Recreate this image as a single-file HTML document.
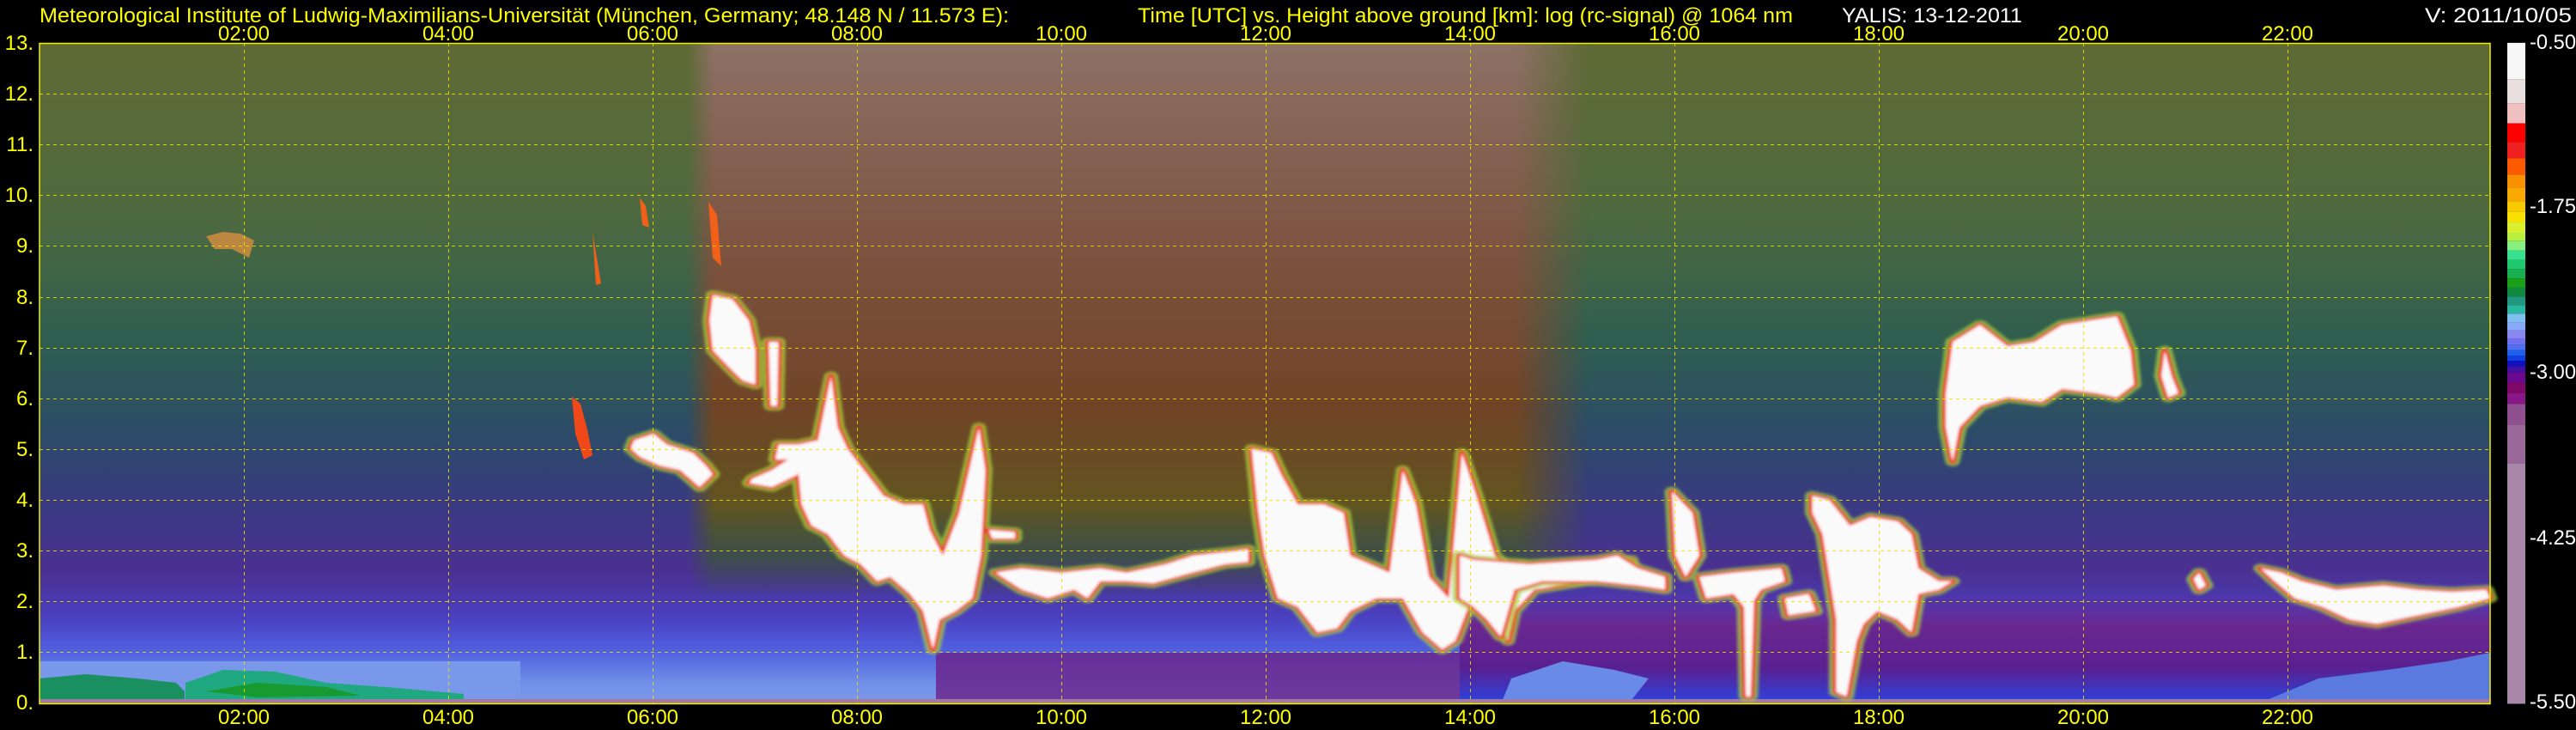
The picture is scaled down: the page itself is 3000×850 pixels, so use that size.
<!DOCTYPE html>
<html><head><meta charset="utf-8"><style>
html,body{margin:0;padding:0;background:#000;}
svg{display:block;}
text{font-family:"Liberation Sans",sans-serif;font-size:24px;}
</style></head><body>
<svg width="3000" height="850" viewBox="0 0 3000 850" xmlns="http://www.w3.org/2000/svg">
<defs>
<linearGradient id="bg" x1="0" y1="0" x2="0" y2="1">
<stop offset="0" stop-color="#5f6a35"/>
<stop offset="0.25" stop-color="#4f6a3e"/>
<stop offset="0.45" stop-color="#2f5e50"/>
<stop offset="0.6" stop-color="#2c4a6a"/>
<stop offset="0.7" stop-color="#3a3a82"/>
<stop offset="0.8" stop-color="#4a3092"/>
<stop offset="0.87" stop-color="#4a40c0"/>
<stop offset="0.92" stop-color="#5060e0"/>
<stop offset="0.97" stop-color="#7090e8"/>
<stop offset="1" stop-color="#8098e8"/>
</linearGradient>
<linearGradient id="red" x1="0" y1="0" x2="0" y2="1">
<stop offset="0" stop-color="#8c7266"/>
<stop offset="0.3" stop-color="#7e5442"/>
<stop offset="0.55" stop-color="#704426"/>
<stop offset="0.7" stop-color="#625420"/>
<stop offset="0.78" stop-color="#3a5a30" stop-opacity="0.7"/>
<stop offset="0.84" stop-color="#3a5a30" stop-opacity="0"/>
</linearGradient>
<linearGradient id="hm" x1="0" y1="0" x2="1" y2="0">
<stop offset="0" stop-color="#000"/>
<stop offset="0.03" stop-color="#fff"/>
<stop offset="0.92" stop-color="#fff"/>
<stop offset="1" stop-color="#000"/>
</linearGradient>
<mask id="m1"><rect x="800" y="50" width="1050" height="769" fill="url(#hm)"/></mask>
<linearGradient id="rbot" x1="0" y1="0" x2="0" y2="1">
<stop offset="0" stop-color="#6a2890" stop-opacity="0"/>
<stop offset="0.3" stop-color="#6a2890"/>
<stop offset="0.7" stop-color="#5a2090"/>
<stop offset="1" stop-color="#3040d8"/>
</linearGradient>
<filter id="soft"><feGaussianBlur stdDeviation="1.5"/></filter>
<path id="cA" d="M170,590 200,600 225,650 235,720 235,800 215,790 195,760 170,720 165,650Z"/>
<path id="cA2" d="M255,700 270,700 268,850 258,850Z"/>
<path id="cB" d="M300,940 330,930 350,780 360,900 375,950 400,1000 430,1060 460,1080 490,1080 500,1140 520,1200 545,1100 560,1000 575,900 585,1000 578,1200 565,1300 540,1330 515,1350 505,1420 490,1330 470,1290 440,1250 420,1260 395,1220 370,1200 345,1150 320,1130 305,1080 300,1000Z M230,1020 260,1000 300,960 300,1010 260,1040 225,1030Z M270,940 310,940 310,975 265,975Z"/>
<path id="cC" d="M600,1240 640,1230 700,1240 760,1230 800,1240 860,1220 900,1200 960,1190 985,1185 985,1215 950,1220 900,1240 840,1265 800,1260 760,1260 740,1300 720,1280 680,1300 640,1280 620,1260Z M590,1140 630,1145 630,1160 595,1160Z"/>
<path id="cD" d="M990,950 1020,960 1035,1010 1060,1080 1100,1080 1130,1100 1140,1200 1200,1240 1220,1000 1240,1080 1260,1250 1290,1300 1310,960 1330,1050 1360,1200 1390,1240 1400,1220 1420,1230 1500,1220 1568,1210 1568,1250 1500,1260 1420,1280 1390,1330 1380,1400 1360,1330 1320,1320 1300,1400 1280,1420 1250,1380 1220,1300 1180,1300 1140,1330 1120,1370 1090,1380 1060,1320 1030,1300 1010,1200 1000,1100Z M50,930 80,915 100,940 140,960 160,990 170,1010 150,1040 120,1000 90,990 60,970 45,950Z"/>
<path id="cE" d="M0,1200 20,1210 100,1220 200,1210 230,1200 260,1230 300,1250 300,1280 260,1270 200,1260 120,1260 80,1280 60,1390 40,1350 20,1320 0,1300Z M310,1050 340,1100 350,1200 330,1250 315,1200Z M350,1250 400,1240 470,1230 475,1260 440,1280 420,1330 400,1290 360,1300Z M415,1300 430,1300 425,1530 418,1530Z M515,1060 540,1070 570,1130 600,1110 640,1120 660,1150 670,1230 700,1260 720,1260 700,1280 670,1290 660,1380 640,1350 610,1330 590,1360 580,1400 565,1530 550,1520 550,1350 540,1250 530,1150 515,1100Z M475,1300 510,1290 520,1330 480,1340Z M720,700 760,660 800,710 840,700 880,660 920,650 960,640 980,720 985,800 960,830 930,820 880,810 850,840 800,830 760,850 730,900 720,980 710,900 710,820Z M1030,720 1040,780 1050,820 1035,830 1025,780Z M1170,1230 1200,1240 1230,1260 1280,1280 1350,1270 1400,1280 1450,1285 1500,1280 1505,1300 1460,1320 1400,1340 1340,1360 1300,1350 1260,1320 1220,1300 1190,1260Z M1080,1240 1090,1270 1080,1280 1072,1255Z"/>
</defs>

<rect x="46" y="50" width="2854" height="769" fill="url(#bg)"/>
<rect x="46" y="770" width="560" height="45" fill="#7a98ea"/>
<path d="M46,790 100,785 160,790 205,795 215,805 215,815 46,815Z" fill="#1a9060"/>
<path d="M216,795 260,780 320,782 380,795 450,800 540,808 540,815 216,815Z" fill="#20a880"/>
<path d="M240,805 300,795 380,800 420,810 300,812Z" fill="#189a30"/>
<rect x="1700" y="690" width="1200" height="125" fill="url(#rbot)"/>
<rect x="1090" y="760" width="610" height="55" fill="#6a2088" opacity="0.8"/>
<path d="M1750,815 1760,790 1820,770 1880,780 1920,790 1900,815Z" fill="#6a8ae8"/>
<path d="M2640,815 2700,790 2780,780 2850,770 2900,760 2900,815Z" fill="#5a7ae0"/>
<rect x="800" y="50" width="1050" height="769" fill="url(#red)" mask="url(#m1)"/>
<rect x="46" y="814" width="2854" height="5" fill="#a07aa0"/>

<g filter="url(#soft)">
<g transform="translate(700,50) scale(0.7653,0.4974)">
<g fill="none" stroke="#a8d040" stroke-width="22" stroke-linejoin="round" opacity="0.7"><use href="#cA"/><use href="#cA2"/><use href="#cB"/><use href="#cC"/><use href="#cD"/></g>
<g fill="none" stroke="#f02818" stroke-width="10" stroke-linejoin="round"><use href="#cA"/><use href="#cA2"/><use href="#cB"/><use href="#cC"/><use href="#cD"/></g>
<g fill="#fafafa"><use href="#cA"/><use href="#cA2"/><use href="#cB"/><use href="#cC"/><use href="#cD"/></g>
</g>
<g transform="translate(1700,50) scale(0.7972,0.4974)">
<g fill="none" stroke="#a8d040" stroke-width="22" stroke-linejoin="round" opacity="0.7"><use href="#cE"/></g>
<g fill="none" stroke="#f02818" stroke-width="10" stroke-linejoin="round"><use href="#cE"/></g>
<g fill="#fafafa"><use href="#cE"/></g>
</g>
</g>
<path d="M666,462 676,470 684,500 690,530 680,535 670,505Z" fill="#f04818"/>
<path d="M745,230 752,240 756,265 748,262Z" fill="#f06018"/>
<path d="M825,235 835,250 840,310 830,300Z" fill="#f06018"/>
<path d="M240,275 260,270 280,272 296,280 290,300 270,290 250,290Z" fill="#d89040" opacity="0.8"/>
<path d="M690,270 700,330 694,332Z" fill="#f06018"/>

<g stroke="#f0e000" stroke-width="1" stroke-dasharray="4,4" opacity="0.85">
<line x1="46" x2="2900" y1="759.5" y2="759.5"/><line x1="46" x2="2900" y1="700.5" y2="700.5"/>
<line x1="46" x2="2900" y1="641.5" y2="641.5"/><line x1="46" x2="2900" y1="582.5" y2="582.5"/>
<line x1="46" x2="2900" y1="523.5" y2="523.5"/><line x1="46" x2="2900" y1="464.5" y2="464.5"/>
<line x1="46" x2="2900" y1="405.5" y2="405.5"/><line x1="46" x2="2900" y1="346.5" y2="346.5"/>
<line x1="46" x2="2900" y1="286.5" y2="286.5"/><line x1="46" x2="2900" y1="227.5" y2="227.5"/>
<line x1="46" x2="2900" y1="168.5" y2="168.5"/><line x1="46" x2="2900" y1="109.5" y2="109.5"/>
<line y1="50" y2="819" x1="284.5" x2="284.5"/><line y1="50" y2="819" x1="522.5" x2="522.5"/>
<line y1="50" y2="819" x1="760.5" x2="760.5"/><line y1="50" y2="819" x1="998.5" x2="998.5"/>
<line y1="50" y2="819" x1="1236.5" x2="1236.5"/><line y1="50" y2="819" x1="1474.5" x2="1474.5"/>
<line y1="50" y2="819" x1="1712.5" x2="1712.5"/><line y1="50" y2="819" x1="1950.5" x2="1950.5"/>
<line y1="50" y2="819" x1="2188.5" x2="2188.5"/><line y1="50" y2="819" x1="2426.5" x2="2426.5"/>
<line y1="50" y2="819" x1="2664.5" x2="2664.5"/>
</g>
<rect x="46" y="50.5" width="2854" height="769" fill="none" stroke="#f0f000" stroke-width="1.5"/>

<g transform="translate(2920,0) scale(1,0.542)">
<rect x="0" y="92" width="21" height="78" fill="#f7f7f7"/>
<rect x="0" y="170" width="21" height="52" fill="#e8dede"/>
<rect x="0" y="222" width="21" height="43" fill="#f0c0c0"/>
<rect x="0" y="265" width="21" height="40" fill="#ff0000"/>
<rect x="0" y="305" width="21" height="35" fill="#f02020"/>
<rect x="0" y="340" width="21" height="35" fill="#ff5a00"/>
<rect x="0" y="375" width="21" height="28" fill="#f89000"/>
<rect x="0" y="403" width="21" height="29" fill="#f8a800"/>
<rect x="0" y="432" width="21" height="23" fill="#f8c800"/>
<rect x="0" y="455" width="21" height="22" fill="#f8e000"/>
<rect x="0" y="477" width="21" height="23" fill="#d8f030"/>
<rect x="0" y="500" width="21" height="18" fill="#b8f040"/>
<rect x="0" y="518" width="21" height="20" fill="#88f080"/>
<rect x="0" y="538" width="21" height="20" fill="#38e090"/>
<rect x="0" y="558" width="21" height="20" fill="#20c870"/>
<rect x="0" y="578" width="21" height="20" fill="#18b050"/>
<rect x="0" y="598" width="21" height="20" fill="#18a018"/>
<rect x="0" y="618" width="21" height="19" fill="#108840"/>
<rect x="0" y="637" width="21" height="19" fill="#209880"/>
<rect x="0" y="656" width="21" height="18" fill="#28b8a0"/>
<rect x="0" y="674" width="21" height="18" fill="#80c0f0"/>
<rect x="0" y="692" width="21" height="18" fill="#88a8f8"/>
<rect x="0" y="710" width="21" height="17" fill="#8888f0"/>
<rect x="0" y="727" width="21" height="13" fill="#7070f0"/>
<rect x="0" y="740" width="21" height="12" fill="#5070f0"/>
<rect x="0" y="752" width="21" height="12" fill="#2060f0"/>
<rect x="0" y="764" width="21" height="11" fill="#1040e0"/>
<rect x="0" y="775" width="21" height="12" fill="#1010c0"/>
<rect x="0" y="787" width="21" height="13" fill="#4010a0"/>
<rect x="0" y="800" width="21" height="22" fill="#6a0890"/>
<rect x="0" y="822" width="21" height="23" fill="#800868"/>
<rect x="0" y="845" width="21" height="23" fill="#881888"/>
<rect x="0" y="868" width="21" height="44" fill="#905090"/>
<rect x="0" y="912" width="21" height="83" fill="#9a6898"/>
<rect x="0" y="995" width="21" height="517" fill="#a888a8"/>
</g>
<g fill="#ffffff" style="font-size:22px">
<text x="2946" y="57" textLength="54" lengthAdjust="spacingAndGlyphs">-0.50</text>
<text x="2946" y="248" textLength="54" lengthAdjust="spacingAndGlyphs">-1.75</text>
<text x="2946" y="441" textLength="54" lengthAdjust="spacingAndGlyphs">-3.00</text>
<text x="2946" y="634" textLength="54" lengthAdjust="spacingAndGlyphs">-4.25</text>
<text x="2946" y="825" textLength="54" lengthAdjust="spacingAndGlyphs">-5.50</text>
</g>

<text x="46" y="26" fill="#ffff00" textLength="1129" lengthAdjust="spacingAndGlyphs">Meteorological Institute of Ludwig-Maximilians-Universität (München, Germany; 48.148 N / 11.573 E):</text>
<text x="1325" y="26" fill="#ffff00" textLength="763" lengthAdjust="spacingAndGlyphs">Time [UTC] vs. Height above ground [km]: log (rc-signal) @ 1064 nm</text>
<text x="2145" y="26" fill="#ffffff" textLength="210" lengthAdjust="spacingAndGlyphs">YALIS: 13-12-2011</text>
<text x="2824" y="26" fill="#ffffff" textLength="171" lengthAdjust="spacingAndGlyphs">V: 2011/10/05</text>

<g fill="#ffff00" text-anchor="middle">
<text x="284" y="47">02:00</text><text x="522" y="47">04:00</text><text x="760" y="47">06:00</text>
<text x="998" y="47">08:00</text><text x="1236" y="47">10:00</text><text x="1474" y="47">12:00</text>
<text x="1712" y="47">14:00</text><text x="1950" y="47">16:00</text><text x="2188" y="47">18:00</text>
<text x="2426" y="47">20:00</text><text x="2664" y="47">22:00</text>
<text x="284" y="843">02:00</text><text x="522" y="843">04:00</text><text x="760" y="843">06:00</text>
<text x="998" y="843">08:00</text><text x="1236" y="843">10:00</text><text x="1474" y="843">12:00</text>
<text x="1712" y="843">14:00</text><text x="1950" y="843">16:00</text><text x="2188" y="843">18:00</text>
<text x="2426" y="843">20:00</text><text x="2664" y="843">22:00</text>
</g>
<g fill="#ffff00" text-anchor="end">
<text x="39" y="826">0.</text><text x="39" y="767">1.</text><text x="39" y="708">2.</text>
<text x="39" y="649">3.</text><text x="39" y="590">4.</text><text x="39" y="531">5.</text>
<text x="39" y="472">6.</text><text x="39" y="413">7.</text><text x="39" y="354">8.</text>
<text x="39" y="294">9.</text><text x="39" y="235">10.</text><text x="39" y="176">11.</text>
<text x="39" y="117">12.</text><text x="39" y="58">13.</text>
</g>
</svg>
</body></html>
